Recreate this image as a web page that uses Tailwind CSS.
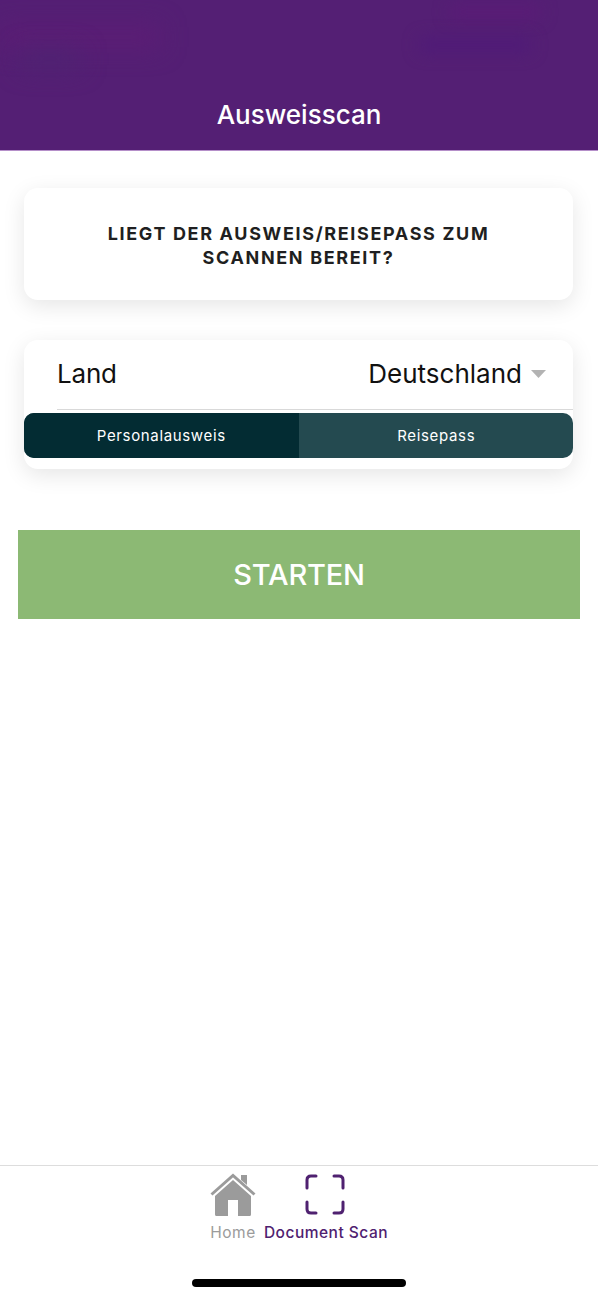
<!DOCTYPE html>
<html lang="de">
<head>
  <meta charset="UTF-8" />
  <meta name="viewport" content="width=device-width, initial-scale=1.0"/>
  <title>Ausweisscan</title>
  <script src="https://cdn.jsdelivr.net/npm/@tailwindcss/browser@4"></script>
</head>
<body class="bg-white">
  <div class="w-[598px] h-[1300px] flex flex-col font-['Inter','Liberation_Sans',sans-serif] overflow-hidden">

    <!-- Header -->
    <header class="relative h-[151px] shrink-0 bg-[#541f74] border-b border-[#b58fc9] flex items-end justify-center pb-[20px] overflow-hidden">
      <div class="absolute left-0 top-[26px] w-[160px] h-[22px] bg-[#5c1d75] blur-md"></div>
      <div class="absolute left-[20px] top-[50px] w-[60px] h-[18px] bg-[#4e2372] blur-md"></div>
      <div class="absolute left-[450px] top-[6px] w-[90px] h-[12px] bg-[#5b1b77] blur-sm"></div>
      <div class="absolute left-[420px] top-[38px] w-[110px] h-[14px] bg-[#4f1a78] blur-sm"></div>
      <h1 class="relative text-white text-[26px] leading-[30px] font-medium">Ausweisscan</h1>
    </header>

    <main class="flex-1 flex flex-col">
      <!-- Frage -->
      <div class="mt-[37px] mx-[24px] w-[549px] h-[112px] bg-white rounded-[14px] shadow-[0_6px_22px_rgba(0,0,0,0.10)] flex items-center justify-center pt-[3px]">
        <p class="text-center text-[18px] leading-[24px] font-bold tracking-[1.650px] text-[#1f1f21] w-[470px]">LIEGT DER AUSWEIS/REISEPASS ZUM SCANNEN BEREIT?</p>
      </div>

      <!-- Auswahl -->
      <div class="mt-[40px] mx-[24px] w-[549px] h-[129px] bg-white rounded-[14px] shadow-[0_6px_22px_rgba(0,0,0,0.10)] flex flex-col">
        <div class="h-[70px] ml-[33px] pr-[27px] pb-[1px] flex items-center justify-between border-b border-[#d9d9d9]">
          <span class="text-[26px] leading-[32px] text-[#111] tracking-[-0.2px]">Land</span>
          <div class="flex items-center gap-[9px]">
            <span class="text-[26px] leading-[32px] text-[#111]">Deutschland</span>
            <svg width="15" height="8" viewBox="0 0 15 8"><path d="M0 0H15L7.500 8Z" fill="#b3b3b3"/></svg>
          </div>
        </div>
        <div class="mt-[3px] h-[45px] flex rounded-[10px] overflow-hidden text-white text-[15px] tracking-[0.65px] bg-[#244a50]">
          <div class="w-1/2 bg-[#032c33] flex items-center justify-center pt-[1px]">Personalausweis</div>
          <div class="w-1/2 flex items-center justify-center pl-[1px] pt-[1px]">Reisepass</div>
        </div>
      </div>

      <button class="mt-[61px] mx-[18px] w-[562px] h-[89px] bg-[#8cb974] text-white text-[29px] tracking-[-0.2px] font-medium pt-[1px]">STARTEN</button>
    </main>

    <!-- Tab bar -->
    <nav class="relative h-[135px] shrink-0 border-t border-[#dddddd] bg-white">
      <div class="flex justify-center gap-[8px] pt-[7px]">
        <div class="w-[46px] flex flex-col items-center">
          <svg width="46" height="44" viewBox="0 0 46 44">
            <path d="M1.500 21.500L23 2.500L44.500 21.500" fill="none" stroke="#9b9b9b" stroke-width="3"/>
            <path d="M31 2H37V12L31 7Z" fill="#9b9b9b"/>
            <path d="M5 23L23 7L41 23V41.500Q41 43 39.500 43H28V27H18V43H6.500Q5 43 5 41.500Z" fill="#9b9b9b"/>
          </svg>
          <span class="mt-[7px] text-[15.500px] leading-[18px] tracking-[0.5px] text-[#9b9b9b] whitespace-nowrap">Home</span>
        </div>
        <div class="w-[124px] flex flex-col items-center">
          <svg width="42" height="44" viewBox="0 0 42 44" fill="none" stroke="#4f2170" stroke-width="3" stroke-linecap="round">
            <path d="M2 15V7Q2 3 6 3H11M29 3H34Q38 3 38 7V15M38 29V36Q38 40 34 40H29M11 40H6Q2 40 2 36V29"/>
          </svg>
          <span class="mt-[7px] text-[15.500px] leading-[18px] tracking-[0.5px] font-medium text-[#4f2170] whitespace-nowrap">Document Scan</span>
        </div>
      </div>
      <div class="absolute left-[192px] top-[113px] w-[214px] h-[8px] rounded-full bg-black"></div>
    </nav>
  </div>
</body>
</html>
